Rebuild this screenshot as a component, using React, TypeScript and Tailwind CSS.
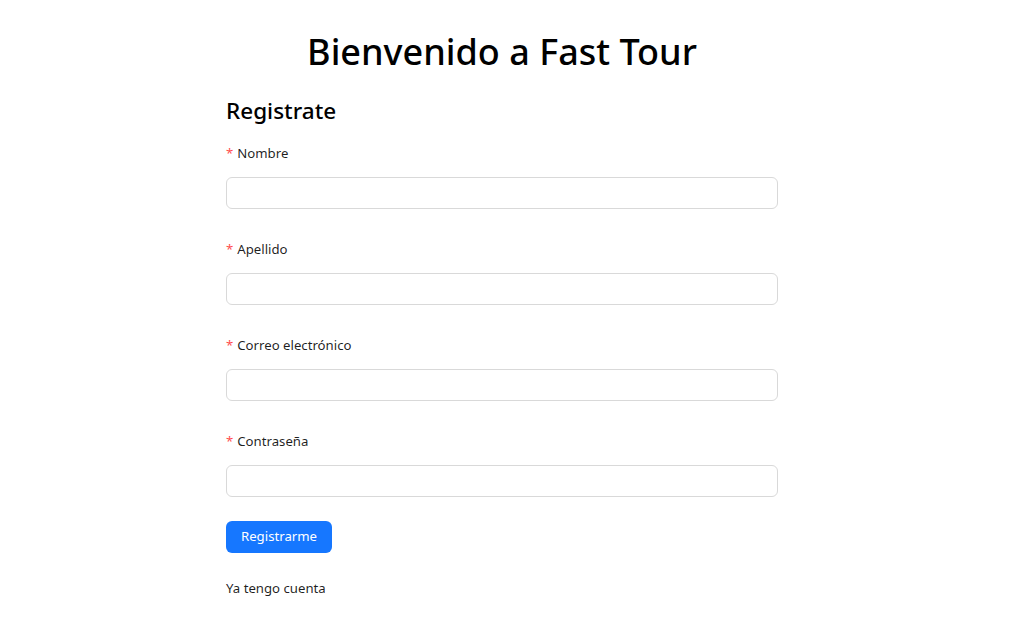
export default function App() {
  const fields = ["Nombre", "Apellido", "Correo electrónico", "Contraseña"];
  return (
    <div className="min-h-[619px] w-[1004px] bg-white text-black" style={{ fontFamily: '"Noto Sans", "Open Sans", sans-serif' }}>
      <div className="flex flex-col items-center pt-[26px]">
        <h1 className="text-[36px] leading-[52px] font-medium">Bienvenido a Fast Tour</h1>
      </div>
      <div className="mx-auto w-[552px] pt-[16px]">
        <h2 className="text-[22.5px] leading-[34px] font-medium">Registrate</h2>
        <div className="mt-[14px] flex flex-col gap-[29px]">
          {fields.map((f) => (
            <div key={f} className="flex flex-col">
              <label className="h-[22px] text-[13.2px] leading-[22px] text-[#000000e0]">
                <span className="text-[#ff4d4f] mr-[4px]">*</span>
                {f}
              </label>
              <input
                type={f === "Contraseña" ? "password" : "text"}
                className="mt-[13px] h-[32px] w-full rounded-[6px] border border-[#d9d9d9] bg-white px-[11px] outline-none"
              />
            </div>
          ))}
        </div>
        <button className="mt-[24px] h-[32px] w-[106px] rounded-[6px] bg-[#1677ff] text-[13.2px] text-white">
          Registrarme
        </button>
        <div className="mt-[24px] text-[13.2px] leading-[22px] text-[#000000e0]">Ya tengo cuenta</div>
      </div>
    </div>
  );
}
